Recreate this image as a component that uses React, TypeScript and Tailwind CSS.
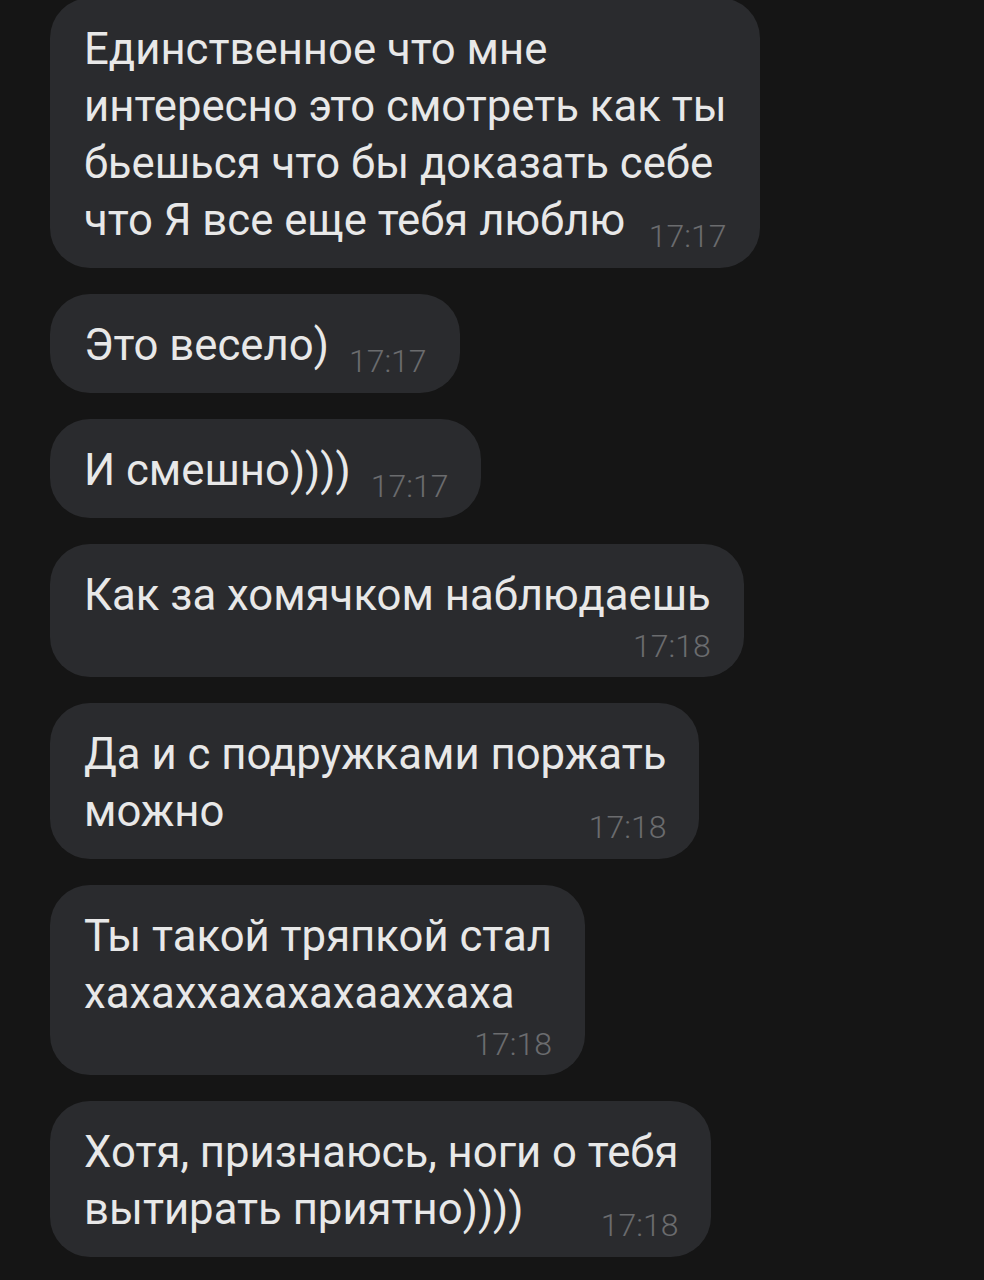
type Message = {
  lines: string[]
  time: string
  timeOwnRow?: boolean
}

const messages: Message[] = [
  {
    lines: [
      "Единственное что мне",
      "интересно это смотреть как ты",
      "бьешься что бы доказать себе",
      "что Я все еще тебя люблю",
    ],
    time: "17:17",
  },
  { lines: ["Это весело)"], time: "17:17" },
  { lines: ["И смешно))))"], time: "17:17" },
  { lines: ["Как за хомячком наблюдаешь"], time: "17:18", timeOwnRow: true },
  { lines: ["Да и с подружками поржать", "можно"], time: "17:18" },
  {
    lines: ["Ты такой тряпкой стал", "хахаххахахахааххаха"],
    time: "17:18",
    timeOwnRow: true,
  },
  { lines: ["Хотя, признаюсь, ноги о тебя", "вытирать приятно))))"], time: "17:18" },
]

const Time = ({ value, inline }: { value: string; inline?: boolean }) => (
  <span
    className={
      "text-[32px] font-light text-[#6b6c6e] whitespace-nowrap " +
      (inline ? "leading-none ml-[20px] translate-y-[12px]" : "")
    }
  >
    {value}
  </span>
)

const Bubble = ({ msg }: { msg: Message }) => {
  const head = msg.timeOwnRow ? msg.lines : msg.lines.slice(0, -1)
  const last = msg.lines[msg.lines.length - 1]

  return (
    <div
      className={
        "w-fit bg-[#2a2b2e] rounded-[40px] pl-[34px] pr-[33px] pt-[23px] " +
        (msg.timeOwnRow ? "pb-[9px]" : "pb-[19px]")
      }
    >
      {head.map((line, i) => (
        <div key={i} className="whitespace-nowrap">
          {line}
        </div>
      ))}

      {msg.timeOwnRow ? (
        <div className="flex justify-end leading-[44px]">
          <Time value={msg.time} />
        </div>
      ) : (
        <div className="flex items-baseline justify-between">
          <span className="whitespace-nowrap">{last}</span>
          <Time value={msg.time} inline />
        </div>
      )}
    </div>
  )
}

export default function App() {
  return (
    <div
      className="min-h-[1280px] w-[984px] overflow-hidden bg-[#151515] text-[#e8e8e8] text-[43.7px] leading-[57px] pl-[50px]"
      style={{ fontFamily: "Roboto, 'Noto Sans', sans-serif" }}
    >
      <div className="flex flex-col gap-[26px] -mt-[2px]">
        {messages.map((m, i) => (
          <Bubble key={i} msg={m} />
        ))}
      </div>
    </div>
  )
}
